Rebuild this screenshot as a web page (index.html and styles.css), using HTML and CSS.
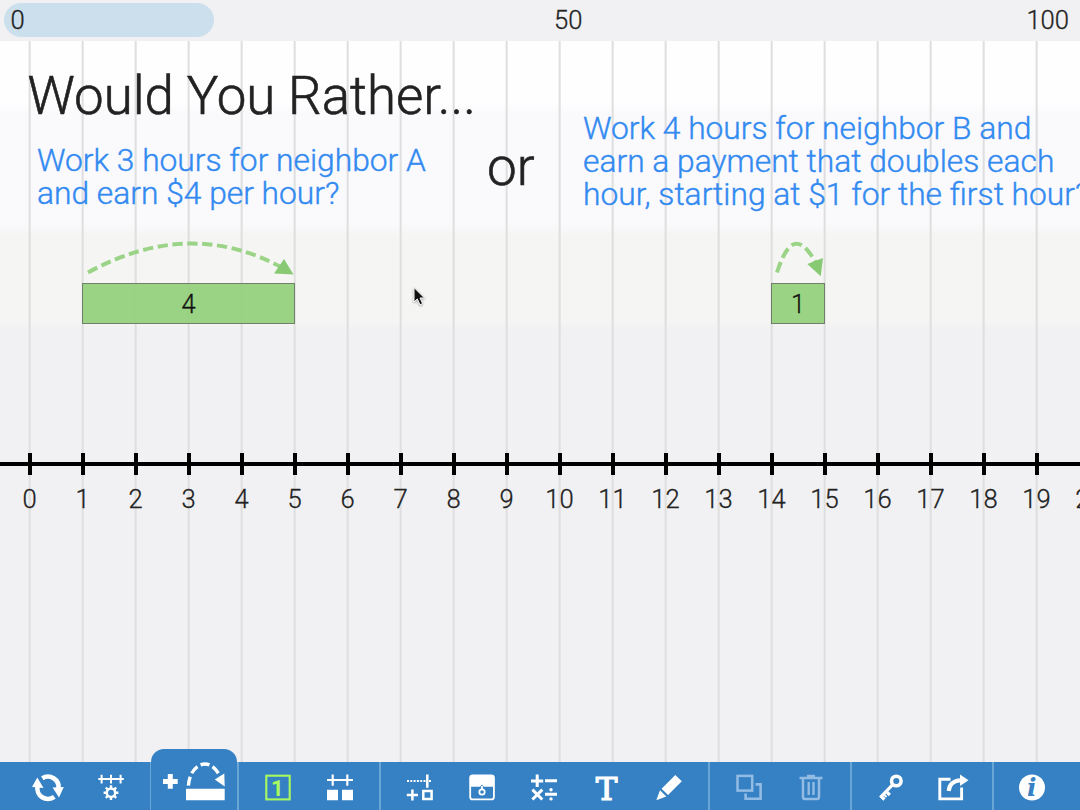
FILE: index.html
```html
<!DOCTYPE html>
<html lang="en">
<head>
<meta charset="utf-8">
<title>Number Line</title>
<link rel="stylesheet" href="styles.css">
</head>
<body>
<div class="app">
  <header class="overview">
    <div class="overview-window"><span>0</span></div>
    <span class="overview-mid">50</span>
    <span class="overview-end">100</span>
  </header>

  <main class="canvas">
    <h1 class="note note-title">Would You Rather...</h1>
    <p class="note note-a">Work 3 hours for neighbor A<br>and earn $4 per hour?</p>
    <p class="note note-or">or</p>
    <p class="note note-b">Work 4 hours for neighbor B and<br>earn a payment that doubles each<br>hour, starting at $1 for the first hour?</p>

    <div class="jump jump-four">
      <svg width="222" height="46" viewBox="78 237 222 46">
        <path class="jump-arc" d="M88 272.500Q188.500 217.500 281 267" stroke-dasharray="10.300 4.600"/>
        <path class="jump-head" d="M293.500 274.500L274 273.500L284 259Z"/>
      </svg>
      <div class="bar bar-four">4</div>
    </div>
    <div class="jump jump-one">
      <svg width="62" height="46" viewBox="767 237 62 46">
        <path class="jump-arc" d="M777 272.500C786 245 797 229.500 815.500 262" stroke-dasharray="11 4.500"/>
        <path class="jump-head" d="M820.700 276.300L807.300 264L823 258Z"/>
      </svg>
      <div class="bar bar-one">1</div>
    </div>

    <div class="axis">
      <span>0</span><span>1</span><span>2</span><span>3</span><span>4</span><span>5</span><span>6</span><span>7</span><span>8</span><span>9</span><span>10</span><span>11</span><span>12</span><span>13</span><span>14</span><span>15</span><span>16</span><span>17</span><span>18</span><span>19</span><span>20</span>
    </div>

    <svg class="cursor" width="14" height="22" viewBox="412 286 14 22">
      <path d="M414 287.500V302L417.300 299L420 304.800L422.600 303.500L420 298H424.500Z" fill="#111" stroke="#fff" stroke-width="1"/>
    </svg>
  </main>

  <nav class="toolbar">
    <div class="group group-first">
      <button class="tool" aria-label="Reset"><svg viewBox="31 772 34 32">
        <path class="s" stroke-width="4.600" d="M54.300 796.800A10.600 10.600 0 0 1 37.600 786M42.300 778.300A10.600 10.600 0 0 1 58.500 788.500"/>
        <path d="M37.300 777.500L32 787L43.500 788ZM59 797.500L52.600 787.500L63.800 787Z"/></svg></button>
      <button class="tool" aria-label="Number line settings"><svg viewBox="93.700 772 34 32">
        <path class="s" stroke-width="2" d="M98 779H123.500M101.300 774.700V783.500M110.700 774.700V783.500M120.300 774.700V783.500"/>
        <circle class="s" cx="110.700" cy="792.700" r="4.200" stroke-width="2.500"/>
        <path class="s" stroke-width="2.400" d="M110.700 785.300V788M110.700 797.400V800.100M103.300 792.700H106M115.400 792.700H118.100M105.500 787.500L107.400 789.400M114 796L115.900 797.900M115.900 787.500L114 789.400M107.400 796L105.500 797.900"/></svg></button>
    </div>
    <button class="tool-tab" aria-label="Add jump"><svg width="85" height="61" viewBox="151 749 85 61">
      <path class="s" stroke-width="5" d="M163 781.400H177.700M170.300 774V788.700"/>
      <path d="M186 788.700H224.700V800.300H186Z"/>
      <path class="s" stroke-width="3.400" stroke-dasharray="9 3.600" d="M188.400 785.600C189.500 772 197 764 205 764C211.500 764 216 768.500 220.500 777"/>
      <path d="M224.700 786.500L214.800 779.500L224.300 773.500Z"/></svg></button>
    <div class="group group-pair">
      <button class="tool" aria-label="Labels"><svg viewBox="260.700 772 34 32">
        <rect x="266" y="775.700" width="23.400" height="23.700" fill="none" stroke="#a8f95f" stroke-width="2.100"/>
        <text class="icon-one" x="277" y="795.600" text-anchor="middle">1</text></svg></button>
      <button class="tool" aria-label="Align"><svg viewBox="322 772 34 32">
        <path class="s" stroke-width="2.200" d="M326 780H352M331.700 774.500V785.700M346.300 774.500V785.700"/>
        <path d="M326 789.700H337V800.300H326ZM341 789.700H352V800.300H341Z"/></svg></button>
    </div>
    <div class="group group-wide">
      <button class="tool" aria-label="Add marker"><svg viewBox="402 772 34 32">
        <path class="s" stroke-width="2.200" stroke-dasharray="2 1.300" d="M406 781H424.500M428 781H431"/>
        <path class="s" stroke-width="2.500" d="M426.300 774.500V787.700M405.800 795H417M411.400 789.500V800.500"/>
        <rect class="s" x="422.300" y="791" width="8.300" height="8" stroke-width="2.500"/></svg></button>
      <button class="tool" aria-label="Hide"><svg viewBox="464.700 772 34 32">
        <rect class="s" x="469.900" y="775.500" width="23.700" height="23.900" rx="2.500" stroke-width="1.800"/>
        <path d="M469.500 777Q469.500 775 471.500 775H492Q494 775 494 777V786.700H469.500Z"/>
        <path d="M479.700 787L481.700 784.500L483.700 787V790H479.700Z" fill="#3581c3"/>
        <path class="s" stroke-width="1.800" d="M481.700 786V789.500"/>
        <circle class="s" cx="481.700" cy="792" r="2.700" stroke-width="1.800"/></svg></button>
      <button class="tool" aria-label="Math"><svg viewBox="527.300 772 34 32">
        <path class="s" stroke-width="3" d="M531.300 781H543.500M537.500 774.500V787M545.300 780.800H557.300M545.300 794.300H557.300M532.700 789.600L542.600 799.500M542.600 789.600L532.700 799.500"/>
        <circle cx="551.300" cy="789.700" r="1.700"/><circle cx="551.300" cy="798.900" r="1.700"/></svg></button>
      <button class="tool" aria-label="Text"><svg viewBox="589 772 34 32">
        <text class="icon-text" x="605.500" y="799.500" text-anchor="middle">T</text></svg></button>
      <button class="tool" aria-label="Draw"><svg viewBox="651.700 772 34 32">
        <path d="M675 775L681.500 781.300L667.700 795L661.300 788.700ZM659.700 790.300L666 796.500L656 800.300Z"/></svg></button>
    </div>
    <div class="group group-pair">
      <button class="tool dim" aria-label="Duplicate"><svg viewBox="731.400 772 34 32">
        <rect class="s" x="736.900" y="775.900" width="14.700" height="14.700" stroke-width="2.500"/>
        <path class="s" stroke-width="2.600" d="M755 784.400H760V798.700H745V793.500"/></svg></button>
      <button class="tool dim" aria-label="Delete"><svg viewBox="794 772 34 32">
        <path class="s" stroke-width="2.500" d="M799.500 778H822.500M807 776H815M803 778V797Q803 799 805 799H817Q819 799 819 797V778"/>
        <path class="s" stroke-width="2.400" d="M808.700 782V795M813.500 782V795"/></svg></button>
    </div>
    <div class="group group-pair">
      <button class="tool" aria-label="Permissions"><svg viewBox="873 772 34 32">
        <circle class="s" cx="895.300" cy="781" r="4.800" stroke-width="3.500"/>
        <path class="s" stroke-width="3.200" d="M891.700 784.700L879.200 797.500M885.300 791.600L888.800 795M880 796.300L883.500 799.500"/>
        <path class="s" stroke-width="2" d="M882.500 794L885.500 797"/></svg></button>
      <button class="tool" aria-label="Share"><svg viewBox="935 772 34 32">
        <path class="s" stroke-width="2.900" d="M949.500 779.300H938.800V798.900H960.600V787.500"/>
        <path class="s" stroke-width="4" d="M947.700 791Q948.500 781 960 780.300"/>
        <path d="M959 774.500L967.500 780.200L959 786Z"/></svg></button>
    </div>
    <div class="group group-last">
      <button class="tool" aria-label="Info"><svg viewBox="1015 772 34 32">
        <circle cx="1032" cy="787.500" r="13"/>
        <text class="icon-info" x="1031.700" y="796" text-anchor="middle">i</text></svg></button>
    </div>
  </nav>
</div>
</body>
</html>
```

FILE: styles.css
```css
* { box-sizing: border-box; }
body { margin: 0; overflow: hidden; }
.app {
  width: 1080px;
  height: 810px;
  overflow: hidden;
  display: flex;
  flex-direction: column;
  font-family: Roboto, sans-serif;
  font-weight: 300;
  color: #222;
  background: #f1f1f3;
  -webkit-text-stroke: .3px currentColor;
}
.overview {
  height: 41px;
  flex: none;
  display: flex;
  align-items: center;
  padding: 0 11px 1px 4px;
  font-size: 25.600px;
  background: #f1f1f3;
}
.overview-window {
  width: 210px;
  height: 34px;
  border-radius: 17px;
  background: #cbdfec;
  padding-left: 6.500px;
  line-height: 34px;
}
.overview-mid { margin-left: 340px; }
.overview-end { margin-left: auto; }

.canvas {
  position: relative;
  flex: 1;
  min-height: 0;
  padding-top: 412px;
  overflow: hidden;
  background:
    repeating-linear-gradient(to right, transparent 0 28px, #dfdfdf 29.300px 30.100px, transparent 31.400px 53px),
    linear-gradient(to bottom, #fefefe 0 62px, #fafafd 72px 182px, #f5f5f4 194px 280px, #f1f1f3 288px);
}
.note { position: absolute; margin: 0; font-weight: 300; white-space: nowrap; }
.note-title { left: 27.500px; top: 24px; font-size: 52.800px; line-height: 62px; -webkit-text-stroke-width: .6px; }
.note-or { left: 487px; top: 95px; font-size: 53px; line-height: 62px; -webkit-text-stroke-width: .6px; }
.note-a, .note-b { font-size: 31.750px; line-height: 33px; color: #338af0; -webkit-text-stroke-width: .4px; }
.note-a { left: 37px; top: 103px; }
.note-b { left: 583px; top: 71px; }

.jump { position: absolute; top: 196px; }
.jump svg { display: block; margin-left: -4px; }
.jump-four { left: 82px; }
.jump-one { left: 771px; }
.jump-arc { fill: none; stroke: #9bd387; stroke-width: 4; }
.jump-head { fill: #88c974; }
.bar {
  height: 41px;
  border: 1.500px solid #71806c;
  background: rgba(147, 209, 124, .95);
  text-align: center;
  line-height: 40px;
  font-size: 25.600px;
  color: #111;
}
.bar-four { width: 213px; }
.bar-one { width: 54px; }

.axis {
  display: flex;
  width: 1117px;
  padding-left: 3px;
  background: linear-gradient(#000, #000) 0 9px / 100% 4px no-repeat;
}
.axis span {
  flex: none;
  width: 53px;
  padding-top: 31px;
  text-align: center;
  font-size: 25.600px;
  line-height: 31px;
  background: linear-gradient(#000, #000) 25px 0 / 4px 22px no-repeat;
}
.cursor {
  position: absolute;
  left: 412px;
  top: 245px;
  overflow: visible;
  filter: drop-shadow(0 1px 1px rgba(0, 0, 0, .35));
}

.toolbar {
  position: relative;
  flex: none;
  height: 48px;
  display: flex;
  align-items: flex-end;
  background: #3581c3;
}
.group {
  flex: none;
  height: 48px;
  display: flex;
  justify-content: center;
  align-items: flex-start;
  padding-top: 10px;
  border-left: 2px solid #69a5d6;
}
.group-first { width: 151px; border-left: 0; border-right: 1px solid #69a5d6; padding-left: 9px; }
.group-pair { width: 142px; }
.group-wide { width: 329px; }
.group-last { width: 88px; padding-right: 10px; }
.tool {
  width: 62.400px;
  height: 32px;
  padding: 0;
  border: 0;
  background: none;
  color: #fff;
  display: flex;
  justify-content: center;
}
.tool svg { flex: none; width: 34px; height: 32px; overflow: visible; }
.toolbar svg { fill: currentColor; }
.toolbar .s { fill: none; stroke: currentColor; }
.toolbar .dim { color: #93bce5; }
.tool-tab {
  flex: none;
  width: 85.800px;
  height: 61px;
  padding: 0;
  border: 0;
  border-radius: 13px 13px 0 0;
  background: #3581c3;
  color: #fff;
}
.tool-tab svg { display: block; }
.icon-one { font: bold 22px Roboto, sans-serif; fill: #a8f95f; }
.icon-text { font: 32.500px "DejaVu Serif", serif; stroke: currentColor; stroke-width: 1.200px; }
.icon-info { font: italic bold 25px "DejaVu Serif", serif; fill: #3581c3; }
```
